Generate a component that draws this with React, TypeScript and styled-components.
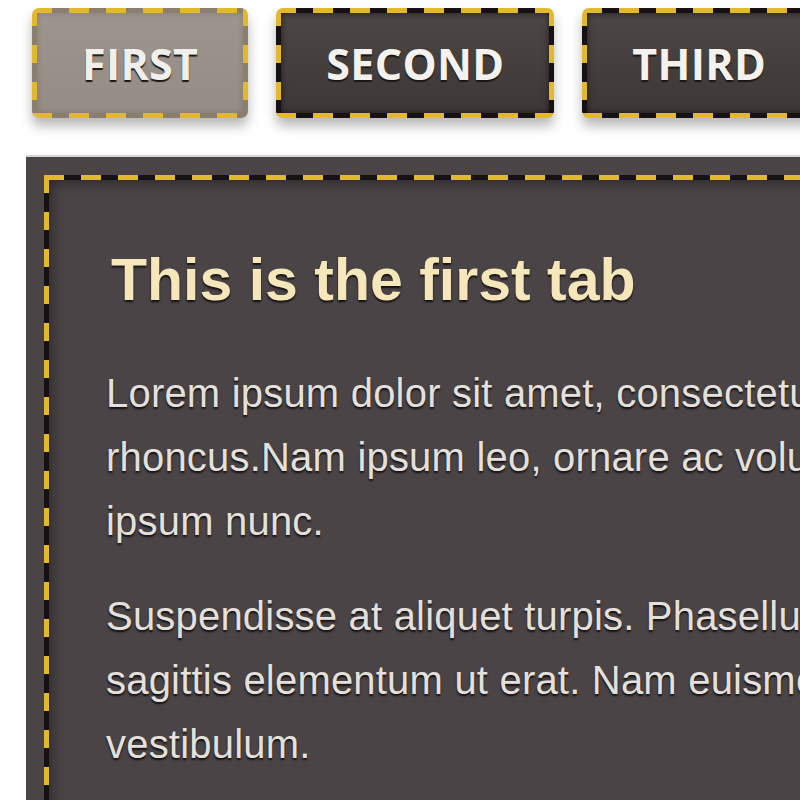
import { useState } from 'react';
import styled, { createGlobalStyle, css } from 'styled-components';

const GlobalStyle = createGlobalStyle`
  html, body {
    margin: 0;
    padding: 0;
    background: #ffffff;
    overflow: hidden;
  }
  #root {
    width: 800px;
    height: 800px;
    overflow: hidden;
  }
`;

type Tab = {
    id: string;
    label: string;
    title: string;
    paragraphs: string[][];
};

const tabs: Tab[] = [
    {
        id: 'first',
        label: 'FIRST',
        title: 'This is the first tab',
        paragraphs: [
            [
                'Lorem ipsum dolor sit amet, consectetur adipiscing elit. Aenean',
                'rhoncus.Nam ipsum leo, ornare ac volutpat quis, tempus vel',
                'ipsum nunc.',
            ],
            [
                'Suspendisse at aliquet turpis. Phasellus eget tortor vitae',
                'sagittis elementum ut erat. Nam euismod sapien sed',
                'vestibulum.',
            ],
        ],
    },
    {
        id: 'second',
        label: 'SECOND',
        title: 'This is the second tab',
        paragraphs: [['Praesent dignissim, nunc in tincidunt dictum,', 'ligula magna gravida mi.']],
    },
    {
        id: 'third',
        label: 'THIRD',
        title: 'This is the third tab',
        paragraphs: [['Curabitur vel lacus eget nisl pulvinar', 'fermentum sit amet eu ante.']],
    },
];

const YELLOW = '#e2b92c';
const BW = 5;

// long yellow dashes on a near-black band, like the original stitched look
const dashedFrame = (fill: string, edge = '#161213') => css`
    border: ${BW}px solid transparent;
    background:
        repeating-linear-gradient(90deg, ${YELLOW} 0 20px, transparent 20px 37px) top left / 100% ${BW}px no-repeat border-box,
        repeating-linear-gradient(90deg, ${YELLOW} 0 20px, transparent 20px 37px) bottom left / 100% ${BW}px no-repeat border-box,
        repeating-linear-gradient(180deg, ${YELLOW} 0 18px, transparent 18px 37px) top left / ${BW}px 100% no-repeat border-box,
        repeating-linear-gradient(180deg, ${YELLOW} 0 18px, transparent 18px 37px) top right / ${BW}px 100% no-repeat border-box,
        ${fill} padding-box,
        ${edge} border-box;
`;

const Page = styled.div`
    padding: 8px 0 0 0;
    display: flex;
    flex-direction: column;
`;

const TabBar = styled.div`
    display: flex;
    gap: 28px;
    padding-left: 32px;
`;

const TabButton = styled.button<{ $active: boolean }>`
    height: 110px;
    padding: 0 45px;
    box-sizing: border-box;
    border-radius: 7px;
    ${(p) => p.$active
        ? dashedFrame('linear-gradient(#9d948d, #958c85)', '#8a7f6e')
        : dashedFrame('linear-gradient(#4c4644, #3d3837)')}
    box-shadow:
        0 8px 12px rgba(0, 0, 0, 0.28),
        inset 0 0 6px rgba(0, 0, 0, ${(p) => (p.$active ? '0.15' : '0.6')});
    font-family: "Open Sans", "DejaVu Sans", sans-serif;
    font-weight: 700;
    font-size: 43px;
    letter-spacing: 0.3px;
    color: ${(p) => (p.$active ? '#f1efec' : '#f4f2ef')};
    text-shadow: 0 2px 1px #1a1614;
    cursor: pointer;
`;

const Panel = styled.div`
    margin: 37px 0 0 26px;
    width: 820px;
    height: 700px;
    padding: 18px;
    box-sizing: border-box;
    background: #4a4446;
    border-top: 2px solid #d8d6d5;
`;

const Frame = styled.div`
    height: 100%;
    box-sizing: border-box;
    ${dashedFrame('linear-gradient(#4a4446, #4a4446)')}
    box-shadow: inset 8px 8px 14px -6px rgba(0, 0, 0, 0.45);
    padding: 67px 0 0 57px;
`;

const Heading = styled.h2`
    margin: 0 0 46px 5px;
    font-family: "Liberation Sans", Arial, sans-serif;
    font-weight: 700;
    font-size: 59px;
    line-height: 1.15;
    color: #f6e7bb;
    text-shadow: 0 2px 2px #141011;
`;

const Paragraph = styled.p`
    margin: 0 0 31px 0;
    font-family: "Liberation Sans", Arial, sans-serif;
    font-size: 40px;
    line-height: 64px;
    letter-spacing: 0.2px;
    white-space: nowrap;
    color: #e4e0dc;
    text-shadow: 0 2px 2px #141011;
`;

export default function App() {
    const [active, setActive] = useState('first');
    const current = tabs.find((t) => t.id === active) ?? tabs[0];

    return (
        <>
            <GlobalStyle />
            <Page>
                <TabBar>
                    {tabs.map((t) => (
                        <TabButton key={t.id} $active={t.id === active} onClick={() => setActive(t.id)}>
                            {t.label}
                        </TabButton>
                    ))}
                </TabBar>
                <Panel>
                    <Frame>
                        <Heading>{current.title}</Heading>
                        {current.paragraphs.map((lines, i) => (
                            <Paragraph key={i}>
                                {lines.map((line, j) => (
                                    <span key={j}>
                                        {line}
                                        {j < lines.length - 1 && <br />}
                                    </span>
                                ))}
                            </Paragraph>
                        ))}
                    </Frame>
                </Panel>
            </Page>
        </>
    );
}
